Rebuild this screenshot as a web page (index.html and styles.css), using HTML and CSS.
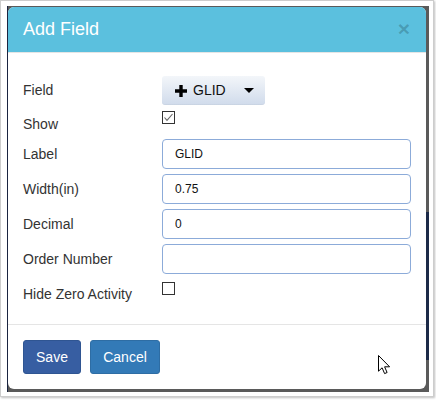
FILE: index.html
```html
<!DOCTYPE html>
<html>
<head>
<meta charset="utf-8">
<title>Add Field</title>
<link rel="stylesheet" href="styles.css">
</head>
<body>
<div class="shot">
  <div class="backdrop">
    <div class="modal">
      <div class="modal-header">
        <h4 class="modal-title">Add Field</h4>
        <span class="close">&times;</span>
      </div>
      <div class="modal-body">
        <div class="row">
          <label class="lbl">Field</label>
          <button class="dd-btn" type="button">
            <svg class="plus" width="12" height="12" viewBox="0 0 12 12"><path d="M4.3 0h3.4v4.3H12v3.4H7.7V12H4.3V7.7H0V4.3h4.3z" fill="#000"/></svg>
            <span class="dd-text">GLID</span>
            <svg class="caret" width="10" height="5" viewBox="0 0 10 5"><path d="M0 0h10L5 5z" fill="#000"/></svg>
          </button>
        </div>
        <div class="row row-show">
          <label class="lbl lbl-show">Show</label>
          <span class="chk chk-show">
            <svg width="11" height="11" viewBox="0 0 11 11"><path d="M1.5 5.5l2.5 2.8 5.5-6.3" fill="none" stroke="#666" stroke-width="1.1"/></svg>
          </span>
        </div>
        <div class="row">
          <label class="lbl">Label</label>
          <input class="inp" type="text" value="GLID">
        </div>
        <div class="row">
          <label class="lbl">Width(in)</label>
          <input class="inp" type="text" value="0.75">
        </div>
        <div class="row">
          <label class="lbl">Decimal</label>
          <input class="inp" type="text" value="0">
        </div>
        <div class="row">
          <label class="lbl">Order Number</label>
          <input class="inp" type="text" value="">
        </div>
        <div class="row row-hide">
          <label class="lbl">Hide Zero Activity</label>
          <span class="chk chk-hide"></span>
        </div>
      </div>
      <div class="modal-footer">
        <button class="btn btn-save" type="button">Save</button>
        <button class="btn btn-cancel" type="button">Cancel</button>
      </div>
    </div>
    <svg class="cursor" width="13" height="20" viewBox="0 0 13 20"><path d="M0.5 0.5V16.2L4.1 12.8L6.6 18.6L9.1 17.5L6.6 11.8H11.6Z" fill="#fff" stroke="#000" stroke-width="1" stroke-linejoin="miter"/></svg>
  </div>
</div>
</body>
</html>
```

FILE: styles.css
```css
html, body {
  margin: 0;
  padding: 0;
  background: #fff;
}

body {
  font-family: "Liberation Sans", Arial, sans-serif;
  width: 436px;
  height: 400px;
  overflow: hidden;
}

.shot {
  box-sizing: border-box;
  width: 434px;
  height: 397px;
  border: 1px solid #cdcdcd;
  box-shadow: 1px 1px 2px rgba(0, 0, 0, 0.25);
  padding: 5px 3px 4px 6px;
}

.backdrop {
  position: relative;
  box-sizing: border-box;
  width: 422px;
  height: 386px;
  padding: 1px 3px 3px 1px;
  background:
    linear-gradient(#1c2a48, #1c2a48) right 206px / 3px 148px no-repeat,
    linear-gradient(to right, #1a2440 0 1px, #5a5a5a 1px);
}

.modal {
  width: 418px;
  height: 382px;
  background: #fff;
  border-radius: 6px;
  overflow: hidden;
  display: flex;
  flex-direction: column;
}

.modal-header {
  background: #5bc0de;
  height: 45px;
  box-sizing: border-box;
  padding: 10px 15px;
  border-bottom: 1px solid #e5e5e5;
  height: 46px;
  display: flex;
  justify-content: space-between;
  align-items: flex-start;
}

.modal-title {
  margin: 0;
  font-size: 18px;
  font-weight: normal;
  line-height: 25px;
  color: #fff;
}

.close {
  font-size: 21px;
  font-weight: bold;
  line-height: 1;
  color: rgba(0, 0, 0, 0.2);
  margin-top: 1px;
  margin-right: 1px;
}

.modal-body {
  box-sizing: border-box;
  height: 272px;
  padding: 22px 15px 15px 15px;
  border-bottom: 1px solid #e5e5e5;
  display: flex;
  flex-direction: column;
  gap: 5px;
}

.row {
  display: flex;
  align-items: center;
  height: 30px;
}

.row-show {
  height: 24px;
  align-items: flex-start;
}

.lbl {
  width: 139px;
  flex: none;
  font-size: 14px;
  color: #333;
}

.lbl-show {
  padding-top: 6px;
}

.dd-btn {
  width: 103px;
  height: 29px;
  margin-top: 0;
  border: none;
  border-radius: 3px;
  background: linear-gradient(#f3f6fa, #d0dbeb);
  display: flex;
  align-items: center;
  padding: 0 0 0 13px;
  font-family: "Liberation Sans", Arial, sans-serif;
  font-size: 14px;
  color: #111;
  box-shadow: inset 0 -1px 0 rgba(0, 0, 0, 0.03);
}

.plus {
  flex: none;
  margin-top: 1px;
}

.dd-text {
  margin-left: 6px;
}

.caret {
  margin-left: 18px;
}

.chk {
  box-sizing: border-box;
  width: 13px;
  height: 13px;
  border: 1px solid #333;
  background: #fff;
  display: block;
  flex: none;
}

.chk svg {
  display: block;
}

.chk-show {
  margin-top: 1px;
}

.row-hide .chk-hide {
  align-self: flex-start;
  margin-top: 3px;
}

.inp {
  box-sizing: border-box;
  width: 249px;
  height: 30px;
  border: 1px solid #8cabd9;
  border-radius: 4px;
  padding: 0 12px;
  font-family: "Liberation Sans", Arial, sans-serif;
  font-size: 12px;
  color: #111;
  background: #fff;
  outline: none;
}

.modal-footer {
  flex: 1;
  padding: 15px;
  display: flex;
  gap: 9px;
  align-items: flex-start;
}

.btn {
  height: 34px;
  border: 1px solid transparent;
  border-radius: 3px;
  color: #fff;
  font-family: "Liberation Sans", Arial, sans-serif;
  font-size: 14px;
  padding: 0 12px;
}

.btn-save {
  width: 58px;
  background: #375ea2;
  border-color: #2f5592;
}

.btn-cancel {
  width: 70px;
  background: #337ab7;
  border-color: #2e6da4;
}

.cursor {
  position: absolute;
  left: 371px;
  top: 349px;
}
```
